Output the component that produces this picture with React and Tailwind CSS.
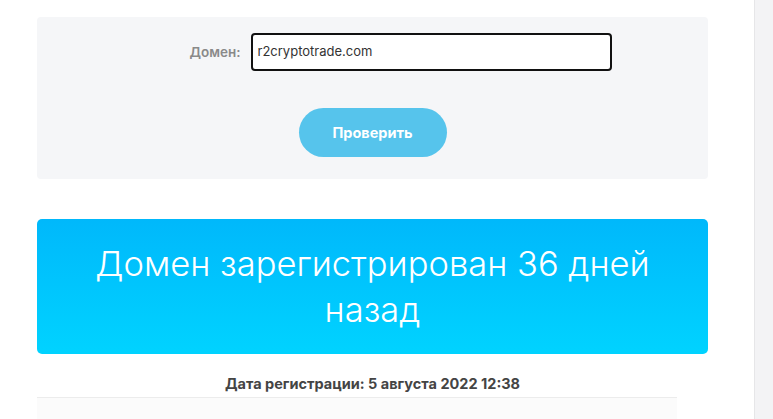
export default function App() {
  return (
    <div className="flex h-[419px] w-[773px] overflow-hidden bg-white font-['Inter','Noto_Sans',sans-serif]">
      <main className="flex w-[754px] flex-col pl-[37px] pr-[46px] pt-[17px]">
        {/* domain lookup form */}
        <section className="flex h-[162px] shrink-0 flex-col items-center rounded-[4px] bg-[#f5f6f8] pt-4">
          <div className="flex items-center gap-[10px] pl-[56px]">
            <label className="text-[13.5px] font-semibold text-[#8a8a8a]">Домен:</label>
            <div className="flex h-[38px] w-[361px] items-center rounded-[4px] border-2 border-[#111] bg-white px-[5px] text-[13px] text-[#333]">
              r2cryptotrade.com
            </div>
          </div>
          <button className="mt-[37px] h-[49px] w-[148px] rounded-full bg-[#56c4ec] text-[14.5px] font-bold text-white">
            Проверить
          </button>
        </section>

        {/* result banner */}
        <section className="mt-[40px] flex h-[135px] shrink-0 items-center justify-center rounded-[5px] bg-gradient-to-b from-[#00b8fb] to-[#00d3ff] px-10 text-center">
          <h2 className="text-[34.5px] font-light leading-[46px] text-white">
            Домен зарегистрирован 36 дней назад
          </h2>
        </section>

        <p className="mt-[21px] shrink-0 text-center text-[14.5px] font-bold leading-[18px] text-[#444]">
          Дата регистрации: 5 августа 2022 12:38
        </p>

        <div className="mt-[4px] mr-[31px] h-[30px] shrink-0 border-t border-[#ececec] bg-[#fbfbfb]" />
      </main>
      <aside className="w-[19px] border-l border-[#e6e6e8] bg-[#f3f3f5]" />
    </div>
  );
}
